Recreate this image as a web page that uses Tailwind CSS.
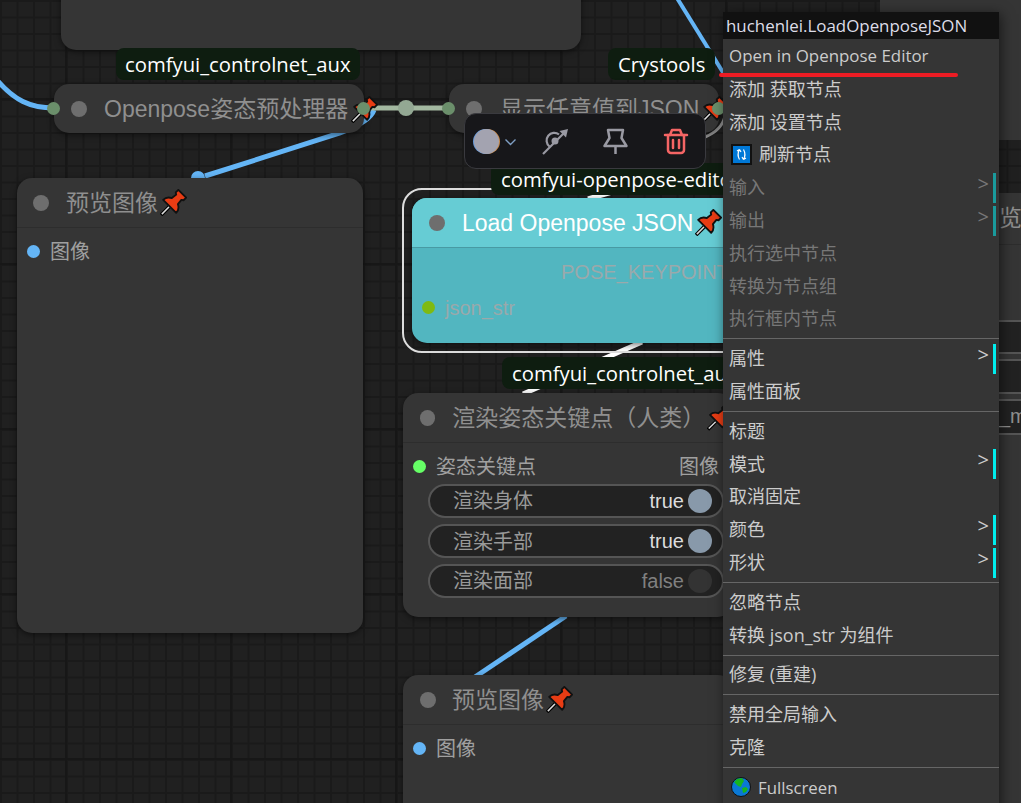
<!DOCTYPE html>
<html lang="en">
<head>
    <meta charset="UTF-8">
    <meta name="viewport" content="width=device-width, initial-scale=1.0">
    <title>ComfyUI node menu</title>
    <script src="https://cdn.jsdelivr.net/npm/@tailwindcss/browser@4"></script>
</head>
<body class="bg-[#202020]">
    <svg class="hidden">
        <symbol id="pin" viewBox="2 0 22 22">
            <g transform="rotate(45 12 12)">
                <path d="M12 15v10" stroke="#000" stroke-width="3"/>
                <path d="M12 15v9" stroke="#ddd" stroke-width="1.2"/>
                <path d="M7.5 0.5H16.5V3.5L15 4.5L15.5 9C17.5 10 19.5 12 19.5 15H4.5C4.5 12 6.5 10 8.5 9L9 4.5L7.5 3.5Z" fill="#e83c14" stroke="#111" stroke-width="1.5" stroke-linejoin="round"/>
            </g>
        </symbol>
    </svg>

    <div class="relative w-[1021px] h-[803px] overflow-hidden bg-[#202020] font-['Liberation_Sans','Noto_Sans_CJK_SC',sans-serif] bg-[linear-gradient(to_right,#171717_2px,transparent_2px),linear-gradient(to_bottom,#171717_2px,transparent_2px),linear-gradient(to_right,#1a1a1a_1.5px,transparent_1.5px),linear-gradient(to_bottom,#1a1a1a_1.5px,transparent_1.5px)] bg-[size:165px_165px,165px_165px,16.5px_16.5px,16.5px_16.5px] bg-[position:65px_98px,65px_98px,0_0,0_0]">

        <!-- wires -->
        <svg class="absolute inset-0" width="1021" height="803" fill="none">
            <path d="M-3 80C14 100 30 108 54 108" stroke="#64b5f6" stroke-width="5"/>
            <path d="M374 110Q370 122 340 133L205 176" stroke="#64b5f6" stroke-width="5"/>
            <circle cx="198" cy="178" r="7" fill="#64b5f6"/>
            <path d="M677 -2L724 74" stroke="#64b5f6" stroke-width="4"/>
            <path d="M566 616L475 677" stroke="#64b5f6" stroke-width="5"/>
            <path d="M364 108H449" stroke="#a3b8a0" stroke-width="5"/>
            <circle cx="406" cy="108" r="8" fill="#93a893"/>
            <path d="M725 116Q722 130 705 137" stroke="#999" stroke-width="3"/>
            <path d="M588 199L612 192" stroke="#fff" stroke-width="5"/>
            <path d="M523 394L642 342" stroke="#fff" stroke-width="5"/>
        </svg>

        <!-- top node, cut off by the window -->
        <div class="absolute left-[61px] top-[-60px] w-[520px] h-[110px] rounded-[15px] bg-[#353535] shadow-[0_2px_6px_rgba(0,0,0,0.5)]"></div>
        <div class="absolute left-[116px] top-[48px] h-[32px] px-[9px] flex items-center rounded-[8px] bg-[#0e1d10] text-white text-[20.3px] font-['Open_Sans',sans-serif]">comfyui_controlnet_aux</div>
        <div class="absolute left-[608px] top-[48px] h-[32px] px-[10px] flex items-center rounded-[8px] bg-[#0e1d10] text-white text-[20.3px] font-['Open_Sans',sans-serif]">Crystools</div>

        <!-- collapsed openpose node -->
        <div class="absolute left-[54px] top-[84px] w-[310px] h-[49px] rounded-[15px] bg-[#353535] shadow-[0_2px_6px_rgba(0,0,0,0.5)] flex items-center pl-[17px]">
            <span class="w-[16px] h-[16px] rounded-full bg-[#6e6e6e]"></span>
            <span class="ml-[17px] mt-[2px] text-[#8f8f8f] text-[23px] whitespace-nowrap">Openpose姿态预处理器</span>
            <svg class="absolute left-[297px] top-[12px] w-[27px] h-[27px]"><use href="#pin"/></svg>
            <span class="absolute left-[-7px] top-[18px] w-[13px] h-[13px] rounded-full bg-[#6b8f6b]"></span>
            <span class="absolute left-[303px] top-[18px] w-[13px] h-[13px] rounded-full bg-[#6b8f6b]"></span>
        </div>

        <!-- collapsed show any node -->
        <div class="absolute left-[449px] top-[84px] w-[270px] h-[49px] rounded-[15px] bg-[#353535] shadow-[0_2px_6px_rgba(0,0,0,0.5)] flex items-center pl-[17px]">
            <span class="w-[16px] h-[16px] rounded-full bg-[#6e6e6e]"></span>
            <span class="ml-[18px] mt-[2px] text-[#8f8f8f] text-[23px] whitespace-nowrap">显示任意值到JSON</span>
            <svg class="absolute left-[252px] top-[12px] w-[27px] h-[27px]"><use href="#pin"/></svg>
            <span class="absolute left-[-7px] top-[18px] w-[13px] h-[13px] rounded-full bg-[#6b8f6b]"></span>
            <span class="absolute left-[263px] top-[18px] w-[13px] h-[13px] rounded-full bg-[#6b8f6b]"></span>
        </div>

        <!-- preview node, left -->
        <div class="absolute left-[17px] top-[178px] w-[346px] h-[455px] rounded-[15px] bg-[#353535] shadow-[0_2px_6px_rgba(0,0,0,0.5)]">
            <div class="h-[50px] border-b border-[#2d2d2d] flex items-center pl-[16px]">
                <span class="w-[16px] h-[16px] rounded-full bg-[#6e6e6e]"></span>
                <span class="ml-[17px] mt-[2px] text-[#8f8f8f] text-[23px]">预览图像</span>
                <svg class="ml-[2px] w-[27px] h-[27px]"><use href="#pin"/></svg>
            </div>
            <div class="mt-[8px] pl-[10px] flex items-center h-[30px]">
                <span class="w-[13px] h-[13px] rounded-full bg-[#64b5f6]"></span>
                <span class="ml-[10px] mt-[2px] text-[#a0a0a0] text-[20px]">图像</span>
            </div>
        </div>

        <!-- load openpose node -->
        <div class="absolute left-[402px] top-[188px] w-[350px] h-[165px] rounded-[20px] border-2 border-[#dddddd]"></div>
        <div class="absolute left-[412px] top-[198px] w-[330px] h-[145px] rounded-[15px] bg-[#52b6c0] shadow-[0_2px_6px_rgba(0,0,0,0.5)]">
            <div class="h-[50px] rounded-t-[15px] bg-[#66ccd4] border-b border-[#489aa3] flex items-center pl-[17px]">
                <span class="w-[16px] h-[16px] rounded-full bg-[#6e6e6e]"></span>
                <span class="ml-[17px] mt-[2px] text-white text-[23px] whitespace-nowrap">Load Openpose JSON</span>
                <svg class="ml-[2px] w-[27px] h-[27px]"><use href="#pin"/></svg>
            </div>
            <div class="absolute left-[149px] top-[59px] text-[#9aa9ab] text-[20px] whitespace-nowrap">POSE_KEYPOINTS</div>
            <div class="absolute left-[10px] top-[97px] flex items-center h-[24px]">
                <span class="w-[13px] h-[13px] rounded-full bg-[#7fba12]"></span>
                <span class="ml-[10px] mt-[2px] text-[#9aa9ab] text-[20px]">json_str</span>
            </div>
        </div>
        <div class="absolute left-[491px] top-[163px] h-[32px] px-[10px] flex items-center rounded-[8px] bg-[#0e1d10] text-white text-[20.3px] font-['Open_Sans',sans-serif] whitespace-nowrap">comfyui-openpose-editor</div>

        <!-- render pose node -->
        <div class="absolute left-[403px] top-[393px] w-[330px] h-[224px] rounded-[15px] bg-[#353535] shadow-[0_2px_6px_rgba(0,0,0,0.5)]">
            <div class="h-[50px] border-b border-[#2d2d2d] flex items-center pl-[17px]">
                <span class="w-[16px] h-[16px] rounded-full bg-[#6e6e6e]"></span>
                <span class="ml-[17px] mt-[2px] text-[#8f8f8f] text-[23px] whitespace-nowrap">渲染姿态关键点（人类）</span>
                <svg class="ml-[2px] w-[27px] h-[27px]"><use href="#pin"/></svg>
            </div>
            <div class="mt-[8px] pl-[10px] pr-[14px] flex items-center h-[30px] text-[#a0a0a0] text-[20px]">
                <span class="w-[13px] h-[13px] rounded-full bg-[#66ff66]"></span>
                <span class="ml-[10px] mt-[2px]">姿态关键点</span>
                <span class="ml-auto mt-[2px]">图像</span>
            </div>
            <div class="mt-[3px] ml-[25px] mr-[9px] flex flex-col gap-[6px] text-[20px]">
                <div class="h-[34px] rounded-full bg-[#222222] border-2 border-[#555555] flex items-center pl-[23px] pr-[10px]">
                    <span class="text-[#999999]">渲染身体</span>
                    <span class="ml-auto text-[#dddddd]">true</span>
                    <span class="ml-[4px] w-[24px] h-[24px] rounded-full bg-[#8899aa]"></span>
                </div>
                <div class="h-[34px] rounded-full bg-[#222222] border-2 border-[#555555] flex items-center pl-[23px] pr-[10px]">
                    <span class="text-[#999999] mt-[1px]">渲染手部</span>
                    <span class="ml-auto text-[#dddddd]">true</span>
                    <span class="ml-[4px] w-[24px] h-[24px] rounded-full bg-[#8899aa]"></span>
                </div>
                <div class="h-[34px] rounded-full bg-[#222222] border-2 border-[#555555] flex items-center pl-[23px] pr-[10px]">
                    <span class="text-[#999999]">渲染面部</span>
                    <span class="ml-auto text-[#808080]">false</span>
                    <span class="ml-[4px] w-[24px] h-[24px] rounded-full bg-[#333333]"></span>
                </div>
            </div>
        </div>
        <div class="absolute left-[502px] top-[357px] h-[32px] px-[10px] flex items-center rounded-[8px] bg-[#0e1d10] text-white text-[20.3px] font-['Open_Sans',sans-serif] whitespace-nowrap">comfyui_controlnet_aux</div>

        <!-- preview node, bottom -->
        <div class="absolute left-[403px] top-[675px] w-[330px] h-[180px] rounded-[15px] bg-[#353535] shadow-[0_2px_6px_rgba(0,0,0,0.5)]">
            <div class="h-[50px] border-b border-[#2d2d2d] flex items-center pl-[17px]">
                <span class="w-[16px] h-[16px] rounded-full bg-[#6e6e6e]"></span>
                <span class="ml-[16px] mt-[2px] text-[#8f8f8f] text-[23px]">预览图像</span>
                <svg class="ml-[2px] w-[27px] h-[27px]"><use href="#pin"/></svg>
            </div>
            <div class="mt-[8px] pl-[10px] flex items-center h-[30px]">
                <span class="w-[13px] h-[13px] rounded-full bg-[#64b5f6]"></span>
                <span class="ml-[10px] mt-[2px] text-[#a0a0a0] text-[20px]">图像</span>
            </div>
        </div>

        <!-- nodes behind the menu, right side -->
        <div class="absolute left-[880px] top-[-60px] w-[200px] h-[200px] bg-[#353535]"></div>
        <div class="absolute left-[880px] top-[193px] w-[200px] h-[700px] bg-[#353535]">
            <div class="h-[52px] border-b border-[#2d2d2d] flex items-center pl-[119px] text-[#8f8f8f] text-[23px] whitespace-nowrap">览图像</div>
            <div class="pt-[75px] flex flex-col gap-[5px] text-[20px] text-[#8f8f8f]">
                <div class="h-[34px] bg-[#222222] border-y-2 border-[#555555]"></div>
                <div class="h-[35px] bg-[#222222] border-y-2 border-[#555555]"></div>
                <div class="h-[36px] bg-[#222222] border-y-2 border-[#555555] pl-[119px] leading-[30px] whitespace-nowrap">_m</div>
            </div>
        </div>

        <!-- selection toolbox -->
        <div class="absolute left-[464px] top-[113px] w-[242px] h-[56px] rounded-[12px] bg-[#17171a] border border-[#3a3a3f] flex items-center pl-[9px]">
            <span class="w-[25px] h-[25px] rounded-full bg-[#a3a3b0] shadow-[-1px_0_0_#6a9bd8,1px_0_0_#c98a4a]"></span>
            <svg class="ml-[5px] w-[13px] h-[13px]" viewBox="0 0 13 13" fill="none" stroke="#7f9fc4" stroke-width="1.4"><path d="M1.5 4.5L6.5 9.5L11.5 4.5"/></svg>
            <svg class="ml-[22px] w-[32px] h-[32px]" viewBox="539 125 32 32" fill="none" stroke="#9a9aa3" stroke-width="2.2">
                <path d="M543 154L566 131"/>
                <path d="M568 129l-8.500 2 6.500 6.500z" fill="#9a9aa3" stroke="none"/>
                <path d="M549.500 146.500A7.500 7.500 0 0 1 559 134.500"/>
                <circle cx="555" cy="141" r="3.500" fill="#9a9aa3" stroke="none"/>
            </svg>
            <svg class="ml-[28px] w-[32px] h-[32px]" viewBox="599 125 32 32" fill="none" stroke="#9a9aa3" stroke-width="2.500" stroke-linejoin="round">
                <path d="M608 130H623L621.500 138L626.500 146H604.500L609.500 138Z"/>
                <path d="M615.500 146V154"/>
            </svg>
            <svg class="ml-[29px] w-[32px] h-[32px]" viewBox="660 125 32 32" fill="none" stroke="#f56565" stroke-width="2.500" stroke-linecap="round" stroke-linejoin="round">
                <path d="M665 135H687"/>
                <path d="M670 135l2-5h8l2 5"/>
                <path d="M668 135v15a3 3 0 0 0 3 3h10a3 3 0 0 0 3-3v-15"/>
                <path d="M673 140v8M679 140v8"/>
            </svg>
        </div>

        <!-- context menu -->
        <div class="absolute left-[723px] top-[12px] w-[276px] h-[820px] bg-[#353535] shadow-[2px_2px_12px_rgba(0,0,0,0.55)] text-[18px] text-[#cccccc] font-['Open_Sans','Noto_Sans_CJK_SC',sans-serif]">
            <div class="h-[27px] bg-[#111111] pl-[3px] flex items-center text-[16.9px] text-[#dddde8] whitespace-nowrap">huchenlei.LoadOpenposeJSON</div>
            <div class="h-[34px] pl-[6px] flex items-center text-[16.9px] whitespace-nowrap">Open in Openpose Editor</div>
            <div class="h-[32.8px] pl-[6px] flex items-center whitespace-nowrap">添加 获取节点</div>
            <div class="h-[32.8px] pl-[6px] flex items-center whitespace-nowrap">添加 设置节点</div>
            <div class="h-[32.8px] pl-[8px] flex items-center whitespace-nowrap">
                <svg class="w-[21px] h-[21px]" viewBox="0 0 21 21" fill="none">
                    <rect x="1" y="1" width="19" height="19" fill="#0078d7" stroke="#111" stroke-width="2"/>
                    <path d="M8.500 15.500C6.500 12 6.500 9 8.500 5.500M8.500 5.500L6 7M8.500 5.500L10 8M12.500 5.500C14.500 9 14.500 12 12.500 15.500M12.500 15.500L11 13M12.500 15.500L15 14" stroke="#fff" stroke-width="1.200"/>
                </svg>
                <span class="ml-[7px]">刷新节点</span>
            </div>
            <div class="h-[32.8px] pl-[6px] flex items-center whitespace-nowrap text-[#777777]">输入<span class="ml-auto mb-[8px] text-[20px]">&gt;</span><span class="ml-[4px] mr-[3px] w-[3px] h-[30px] bg-[#1a9a9c]"></span></div>
            <div class="h-[32.8px] pl-[6px] flex items-center whitespace-nowrap text-[#777777]">输出<span class="ml-auto mb-[8px] text-[20px]">&gt;</span><span class="ml-[4px] mr-[3px] w-[3px] h-[30px] bg-[#1a9a9c]"></span></div>
            <div class="h-[32.8px] pl-[6px] flex items-center whitespace-nowrap text-[#777777]">执行选中节点</div>
            <div class="h-[32.8px] pl-[6px] flex items-center whitespace-nowrap text-[#777777]">转换为节点组</div>
            <div class="h-[32.8px] pl-[6px] flex items-center whitespace-nowrap text-[#777777]">执行框内节点</div>
            <div class="h-[7px] flex items-center"><div class="w-full h-px bg-[#666666]"></div></div>
            <div class="h-[32.8px] pl-[6px] flex items-center whitespace-nowrap">属性<span class="ml-auto mb-[8px] text-[20px]">&gt;</span><span class="ml-[4px] mr-[3px] w-[3px] h-[30px] bg-[#00eeee]"></span></div>
            <div class="h-[32.8px] pl-[6px] flex items-center whitespace-nowrap">属性面板</div>
            <div class="h-[7px] flex items-center"><div class="w-full h-px bg-[#666666]"></div></div>
            <div class="h-[32.8px] pl-[6px] flex items-center whitespace-nowrap">标题</div>
            <div class="h-[32.8px] pl-[6px] flex items-center whitespace-nowrap">模式<span class="ml-auto mb-[8px] text-[20px]">&gt;</span><span class="ml-[4px] mr-[3px] w-[3px] h-[30px] bg-[#00eeee]"></span></div>
            <div class="h-[32.8px] pl-[6px] flex items-center whitespace-nowrap">取消固定</div>
            <div class="h-[32.8px] pl-[6px] flex items-center whitespace-nowrap">颜色<span class="ml-auto mb-[8px] text-[20px]">&gt;</span><span class="ml-[4px] mr-[3px] w-[3px] h-[30px] bg-[#00eeee]"></span></div>
            <div class="h-[32.8px] pl-[6px] flex items-center whitespace-nowrap">形状<span class="ml-auto mb-[8px] text-[20px]">&gt;</span><span class="ml-[4px] mr-[3px] w-[3px] h-[30px] bg-[#00eeee]"></span></div>
            <div class="h-[7px] flex items-center"><div class="w-full h-px bg-[#666666]"></div></div>
            <div class="h-[32.8px] pl-[6px] flex items-center whitespace-nowrap">忽略节点</div>
            <div class="h-[32.8px] pl-[6px] flex items-center whitespace-nowrap">转换 json_str 为组件</div>
            <div class="h-[7px] flex items-center"><div class="w-full h-px bg-[#666666]"></div></div>
            <div class="h-[32.8px] pl-[6px] flex items-center whitespace-nowrap">修复 (重建)</div>
            <div class="h-[7px] flex items-center"><div class="w-full h-px bg-[#666666]"></div></div>
            <div class="h-[32.8px] pl-[6px] flex items-center whitespace-nowrap">禁用全局输入</div>
            <div class="h-[32.8px] pl-[6px] flex items-center whitespace-nowrap">克隆</div>
            <div class="h-[7px] flex items-center"><div class="w-full h-px bg-[#666666]"></div></div>
            <div class="h-[32.8px] pl-[8px] flex items-center text-[16.8px] whitespace-nowrap">
                <svg class="w-[20px] h-[20px]" viewBox="0 0 20 20">
                    <circle cx="10" cy="10" r="9.500" fill="#0a78d4" stroke="#111"/>
                    <path d="M3 5l3-3 5-1 2 3-2 3-1 3-3-1-2-2zM11 11l4-1 2 2-2 3-3 1z" fill="#16b51e"/>
                </svg>
                <span class="ml-[7px]">Fullscreen</span>
            </div>
        </div>

        <!-- red annotation stroke -->
        <div class="absolute left-[719px] top-[73px] w-[239px] h-[4px] rounded-full bg-[#ed1c24]"></div>
    </div>
</body>
</html>
